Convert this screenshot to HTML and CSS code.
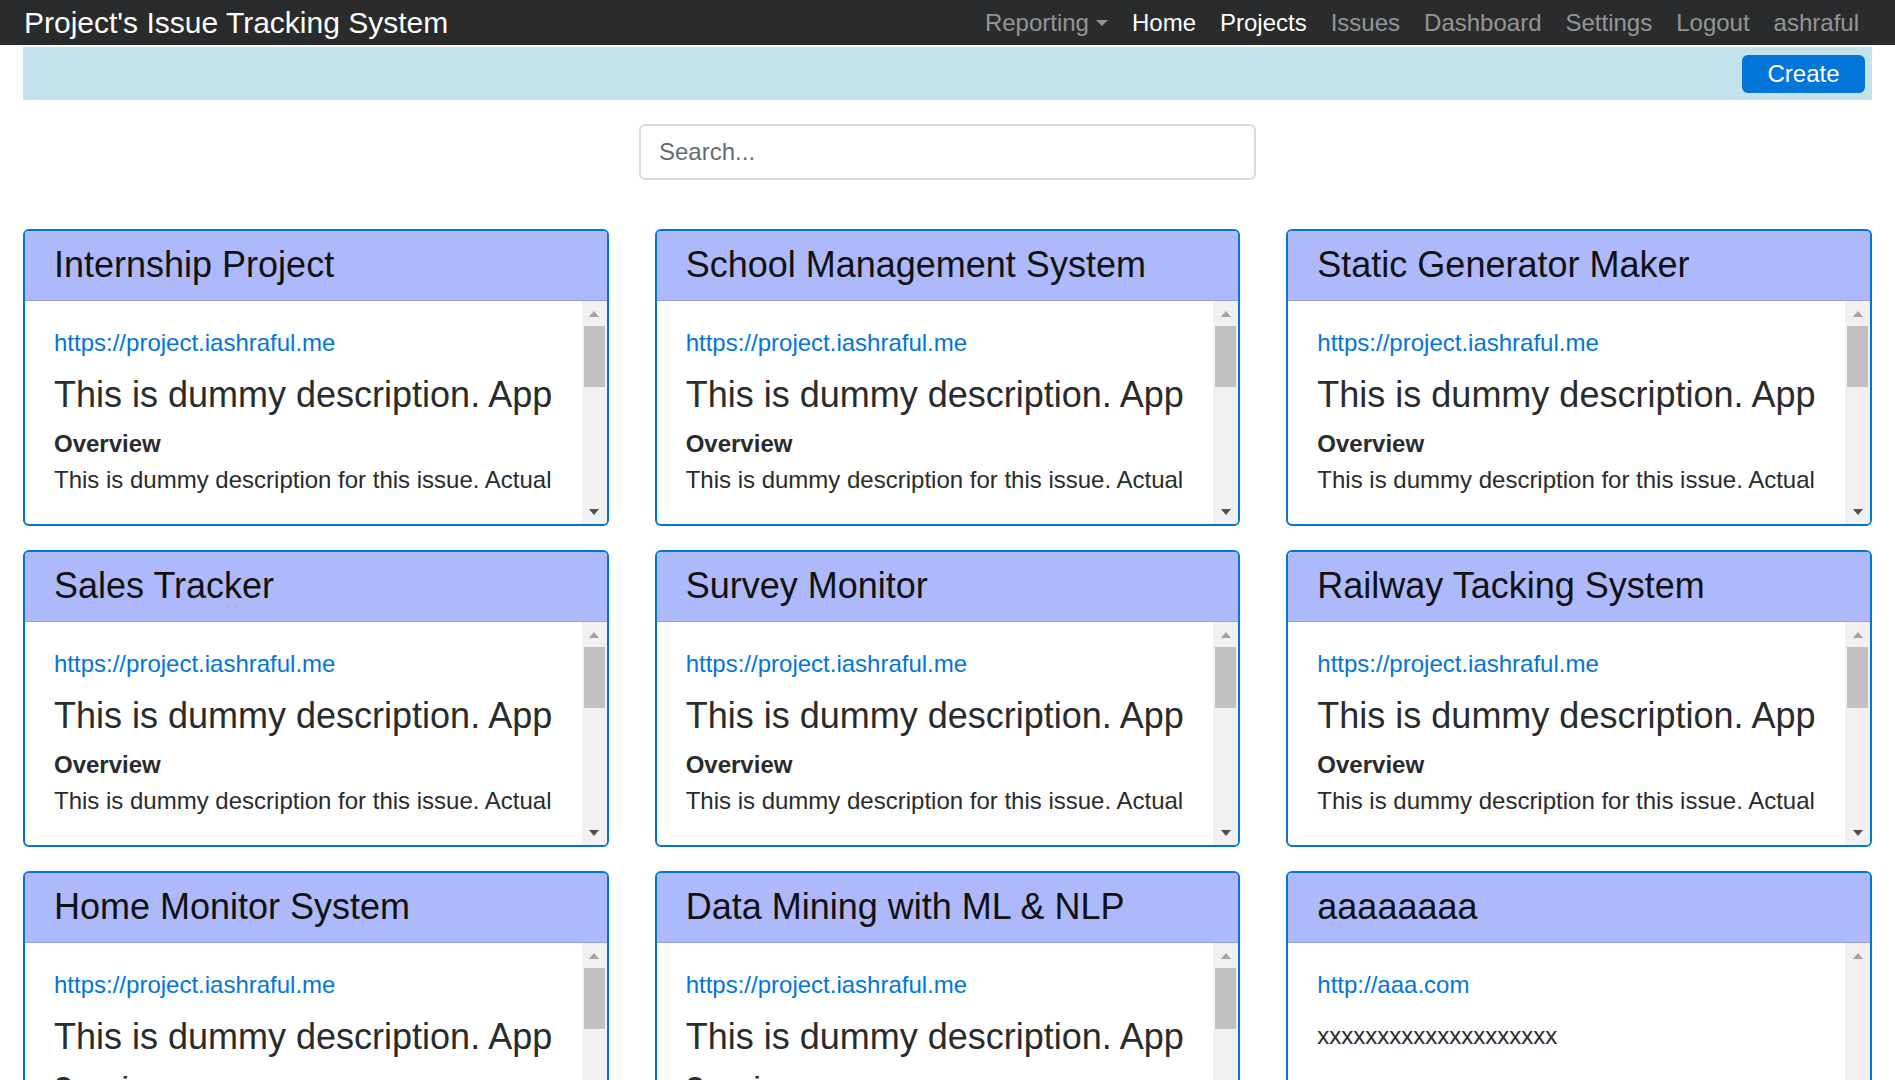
FILE: index.html
```html
<!DOCTYPE html>
<html lang="en">
<head>
<meta charset="utf-8">
<title>Project's Issue Tracking System</title>
<link rel="stylesheet" href="styles.css">
</head>
<body>
<nav class="navbar">
  <a class="brand" href="#">Project's Issue Tracking System</a>
  <ul class="nav">
    <li><a class="nav-link dropdown" href="#">Reporting</a></li>
    <li><a class="nav-link active" href="#">Home</a></li>
    <li><a class="nav-link active" href="#">Projects</a></li>
    <li><a class="nav-link" href="#">Issues</a></li>
    <li><a class="nav-link" href="#">Dashboard</a></li>
    <li><a class="nav-link" href="#">Settings</a></li>
    <li><a class="nav-link" href="#">Logout</a></li>
    <li><a class="nav-link" href="#">ashraful</a></li>
  </ul>
</nav>
<main class="container">
  <div class="toolbar">
    <button class="btn-create" type="button">Create</button>
  </div>
  <div class="search-row">
    <input class="search" type="text" placeholder="Search...">
  </div>
  <div class="grid">
    <div class="card">
      <div class="card-header">Internship Project</div>
      <div class="card-body">
        <div class="card-content">
          <a class="link" href="#">https://project.iashraful.me</a>
          <div class="desc-title">This is dummy description. App</div>
          <div class="overview">Overview</div>
          <div class="desc">This is dummy description for this issue. Actual</div>
        </div>
        <div class="scrollbar"><span class="sb-btn up"></span><span class="sb-thumb"></span><span class="sb-track"></span><span class="sb-btn down"></span></div>
      </div>
    </div>
    <div class="card">
      <div class="card-header">School Management System</div>
      <div class="card-body">
        <div class="card-content">
          <a class="link" href="#">https://project.iashraful.me</a>
          <div class="desc-title">This is dummy description. App</div>
          <div class="overview">Overview</div>
          <div class="desc">This is dummy description for this issue. Actual</div>
        </div>
        <div class="scrollbar"><span class="sb-btn up"></span><span class="sb-thumb"></span><span class="sb-track"></span><span class="sb-btn down"></span></div>
      </div>
    </div>
    <div class="card">
      <div class="card-header">Static Generator Maker</div>
      <div class="card-body">
        <div class="card-content">
          <a class="link" href="#">https://project.iashraful.me</a>
          <div class="desc-title">This is dummy description. App</div>
          <div class="overview">Overview</div>
          <div class="desc">This is dummy description for this issue. Actual</div>
        </div>
        <div class="scrollbar"><span class="sb-btn up"></span><span class="sb-thumb"></span><span class="sb-track"></span><span class="sb-btn down"></span></div>
      </div>
    </div>
    <div class="card">
      <div class="card-header">Sales Tracker</div>
      <div class="card-body">
        <div class="card-content">
          <a class="link" href="#">https://project.iashraful.me</a>
          <div class="desc-title">This is dummy description. App</div>
          <div class="overview">Overview</div>
          <div class="desc">This is dummy description for this issue. Actual</div>
        </div>
        <div class="scrollbar"><span class="sb-btn up"></span><span class="sb-thumb"></span><span class="sb-track"></span><span class="sb-btn down"></span></div>
      </div>
    </div>
    <div class="card">
      <div class="card-header">Survey Monitor</div>
      <div class="card-body">
        <div class="card-content">
          <a class="link" href="#">https://project.iashraful.me</a>
          <div class="desc-title">This is dummy description. App</div>
          <div class="overview">Overview</div>
          <div class="desc">This is dummy description for this issue. Actual</div>
        </div>
        <div class="scrollbar"><span class="sb-btn up"></span><span class="sb-thumb"></span><span class="sb-track"></span><span class="sb-btn down"></span></div>
      </div>
    </div>
    <div class="card">
      <div class="card-header">Railway Tacking System</div>
      <div class="card-body">
        <div class="card-content">
          <a class="link" href="#">https://project.iashraful.me</a>
          <div class="desc-title">This is dummy description. App</div>
          <div class="overview">Overview</div>
          <div class="desc">This is dummy description for this issue. Actual</div>
        </div>
        <div class="scrollbar"><span class="sb-btn up"></span><span class="sb-thumb"></span><span class="sb-track"></span><span class="sb-btn down"></span></div>
      </div>
    </div>
    <div class="card">
      <div class="card-header">Home Monitor System</div>
      <div class="card-body">
        <div class="card-content">
          <a class="link" href="#">https://project.iashraful.me</a>
          <div class="desc-title">This is dummy description. App</div>
          <div class="overview">Overview</div>
          <div class="desc">This is dummy description for this issue. Actual</div>
        </div>
        <div class="scrollbar"><span class="sb-btn up"></span><span class="sb-thumb"></span><span class="sb-track"></span><span class="sb-btn down"></span></div>
      </div>
    </div>
    <div class="card">
      <div class="card-header">Data Mining with ML &amp; NLP</div>
      <div class="card-body">
        <div class="card-content">
          <a class="link" href="#">https://project.iashraful.me</a>
          <div class="desc-title">This is dummy description. App</div>
          <div class="overview">Overview</div>
          <div class="desc">This is dummy description for this issue. Actual</div>
        </div>
        <div class="scrollbar"><span class="sb-btn up"></span><span class="sb-thumb"></span><span class="sb-track"></span><span class="sb-btn down"></span></div>
      </div>
    </div>
    <div class="card">
      <div class="card-header">aaaaaaaa</div>
      <div class="card-body">
        <div class="card-content">
          <a class="link" href="#">http://aaa.com</a>
          <div class="plain">xxxxxxxxxxxxxxxxxxxx</div>
        </div>
        <div class="scrollbar"><span class="sb-btn up"></span><span class="sb-track"></span><span class="sb-btn down disabled"></span></div>
      </div>
    </div>
  </div>
</main>
</body>
</html>
```

FILE: styles.css
```css
* { box-sizing: border-box; }

html, body {
  margin: 0;
  padding: 0;
  background: #fff;
}

body {
  font-family: "Liberation Sans", Arial, sans-serif;
  color: #292b2c;
  font-size: 24px;
}

a { text-decoration: none; }

/* ---------- navbar ---------- */
.navbar {
  height: 45px;
  background: #292b2c;
  display: flex;
  align-items: center;
  justify-content: space-between;
  padding: 0 24px;
}

.brand {
  color: #fff;
  font-size: 30px;
  line-height: 45px;
  white-space: nowrap;
}

.nav {
  list-style: none;
  margin: 0;
  padding: 0;
  display: flex;
}

.nav-link {
  display: block;
  padding: 0 12px;
  font-size: 24px;
  line-height: 45px;
  color: rgba(255, 255, 255, 0.5);
  white-space: nowrap;
}

.nav-link.active { color: #fff; }

.dropdown::after {
  content: "";
  display: inline-block;
  width: 0;
  height: 0;
  margin-left: 7px;
  vertical-align: middle;
  border-top: 6px solid rgba(255, 255, 255, 0.5);
  border-left: 6px solid transparent;
  border-right: 6px solid transparent;
  position: relative;
  top: -2px;
}

/* ---------- container ---------- */
.container {
  padding: 0 23px;
}

.toolbar {
  margin-top: 2px;
  height: 53px;
  background: #c4e2eb;
  display: flex;
  justify-content: flex-end;
  align-items: flex-start;
  padding: 8px 7px 0 0;
}

.btn-create {
  height: 38px;
  width: 123px;
  border: none;
  border-radius: 6px;
  background: #0275d8;
  color: #fff;
  font-family: "Liberation Sans", Arial, sans-serif;
  font-size: 24px;
  padding: 0;
  cursor: pointer;
}

.search-row {
  display: flex;
  justify-content: center;
  margin-top: 24px;
}

.search {
  width: 617px;
  height: 56px;
  border: 2px solid #dadada;
  border-radius: 6px;
  padding: 0 18px;
  font-family: "Liberation Sans", Arial, sans-serif;
  font-size: 24px;
  color: #464a4c;
  outline: none;
}

.search::placeholder { color: #636c72; }

/* ---------- cards ---------- */
.grid {
  margin-top: 49px;
  display: grid;
  grid-template-columns: repeat(3, 1fr);
  column-gap: 46px;
  row-gap: 24px;
}

.card {
  height: 297px;
  border: 2px solid #0275d8;
  border-radius: 6px;
  display: flex;
  flex-direction: column;
  overflow: hidden;
}

.card-header {
  height: 70px;
  flex: none;
  background: #adb9fb;
  border-bottom: 1px solid #96a1dc;
  padding: 12px 29px 0;
  font-size: 36px;
  line-height: 43px;
  color: #111;
  white-space: nowrap;
}

.card-body {
  flex: 1;
  display: flex;
  min-height: 0;
}

.card-content {
  flex: 1;
  min-width: 0;
  overflow: hidden;
  padding: 24px 29px 0;
}

.link {
  display: block;
  color: #0275d8;
  font-size: 24px;
  line-height: 36px;
  white-space: nowrap;
}

.desc-title {
  margin-top: 14px;
  font-size: 36px;
  line-height: 40px;
  color: #292b2c;
  white-space: nowrap;
}

.overview {
  margin-top: 11px;
  font-weight: bold;
  font-size: 24px;
  line-height: 36px;
  color: #292b2c;
}

.desc {
  font-size: 24px;
  line-height: 36px;
  color: #292b2c;
  white-space: nowrap;
}

.plain {
  margin-top: 14px;
  font-size: 24px;
  line-height: 38px;
  color: #292b2c;
  white-space: nowrap;
}

/* ---------- fake classic scrollbar ---------- */
.scrollbar {
  width: 25px;
  flex: none;
  background: #f1f1f1;
  display: flex;
  flex-direction: column;
}

.sb-btn {
  height: 25px;
  flex: none;
  display: flex;
  align-items: center;
  justify-content: center;
}

.sb-btn::before {
  content: "";
  width: 0;
  height: 0;
  border-left: 5px solid transparent;
  border-right: 5px solid transparent;
}

.sb-btn.up::before { border-bottom: 6px solid #a3a3a3; }
.sb-btn.down::before { border-top: 6px solid #505050; }
.sb-btn.down.disabled::before { border-top-color: #a3a3a3; }

.sb-thumb {
  height: 61px;
  flex: none;
  margin: 0 2px;
  background: #c1c1c1;
}

.sb-track { flex: 1; }
```
